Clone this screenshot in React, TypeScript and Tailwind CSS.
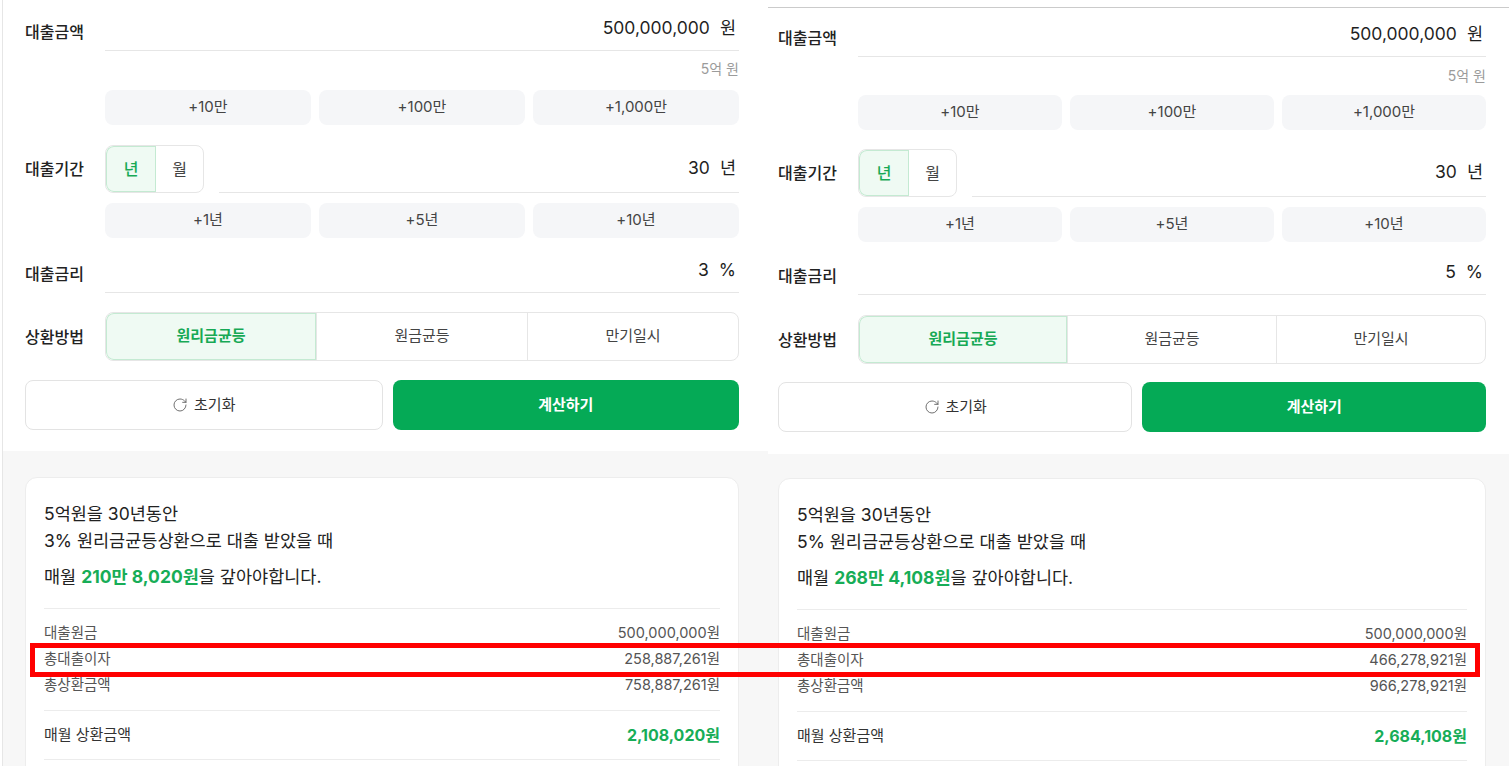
import React from "react";
import { RotateCw } from "lucide-react";

type Data = {
  amount: string;
  amountKo: string;
  years: string;
  rate: string;
  line2: string;
  monthlyHi: string;
  principal: string;
  interest: string;
  total: string;
  monthlyValue: string;
};

type Spacing = {
  outer: string;
  top: string;
  r1: string;
  helper: string;
  btn1: string;
  r2: string;
  btn2: string;
  r3: string;
  r4: string;
  actions: string;
  gray: string;
};

const leftS: Spacing = {
  outer: "w-[766px] ml-[2px] border-l border-[#e6e6e6]",
  top: "pl-[22px] pr-[29px] pt-[7px] pb-[21px]",
  r1: "",
  helper: "mt-[8px]",
  btn1: "mt-[11px]",
  r2: "mt-[20px]",
  btn2: "mt-[10px]",
  r3: "mt-[11px]",
  r4: "mt-[19px]",
  actions: "mt-[19px]",
  gray: "pl-[22px] pr-[29px] pt-[26px]",
};

const rightS: Spacing = {
  outer: "flex-1 mt-[7px] border-t border-[#cbcbcb]",
  top: "pl-[10px] pr-[23px] pt-[5px] pb-[22px]",
  r1: "",
  helper: "mt-[9px]",
  btn1: "mt-[9px]",
  r2: "mt-[19px]",
  btn2: "mt-[10px]",
  r3: "mt-[9px]",
  r4: "mt-[20px]",
  actions: "mt-[18px]",
  gray: "pl-[10px] pr-[23px] pt-[24px]",
};

const leftD: Data = {
  amount: "500,000,000",
  amountKo: "5억 원",
  years: "30",
  rate: "3",
  line2: "3% 원리금균등상환으로 대출 받았을 때",
  monthlyHi: "210만 8,020원",
  principal: "500,000,000원",
  interest: "258,887,261원",
  total: "758,887,261원",
  monthlyValue: "2,108,020원",
};

const rightD: Data = {
  amount: "500,000,000",
  amountKo: "5억 원",
  years: "30",
  rate: "5",
  line2: "5% 원리금균등상환으로 대출 받았을 때",
  monthlyHi: "268만 4,108원",
  principal: "500,000,000원",
  interest: "466,278,921원",
  total: "966,278,921원",
  monthlyValue: "2,684,108원",
};

function Label({ children, top }: { children: React.ReactNode; top?: boolean }) {
  return (
    <div
      className={`w-[80px] shrink-0 text-[16px] leading-[20px] font-medium text-[#222] ${
        top ? "pt-[15px]" : "self-center"
      }`}
    >
      {children}
    </div>
  );
}

function ValueInput({ value, unit, className = "" }: { value: string; unit: string; className?: string }) {
  return (
    <div
      className={`flex-1 border-b border-[#e6e6e6] flex items-center justify-end gap-[10px] pr-[3px] text-[17.5px] text-[#1f1f1f] ${className}`}
    >
      <span>{value}</span>
      <span>{unit}</span>
    </div>
  );
}

function QuickButtons({ items, className }: { items: string[]; className: string }) {
  return (
    <div className={`ml-[80px] grid grid-cols-3 gap-[8px] ${className}`}>
      {items.map((t) => (
        <div
          key={t}
          className="h-[35px] rounded-[8px] bg-[#f5f6f8] flex items-center justify-center text-[15px] text-[#444]"
        >
          {t}
        </div>
      ))}
    </div>
  );
}

function Panel({ d, s }: { d: Data; s: Spacing }) {
  return (
    <div className={`flex flex-col shrink-0 ${s.outer}`}>
      <div className={`bg-white ${s.top}`}>
        <div className={`flex ${s.r1}`}>
          <Label top>대출금액</Label>
          <ValueInput value={d.amount} unit="원" className="h-[44px]" />
        </div>
        <div className={`h-[20px] leading-[20px] text-right text-[14px] text-[#9b9b9b] ${s.helper}`}>
          {d.amountKo}
        </div>
        <QuickButtons items={["+10만", "+100만", "+1,000만"]} className={s.btn1} />

        <div className={`flex ${s.r2}`}>
          <Label>대출기간</Label>
          <div className="flex h-[48px] w-[99px] shrink-0 border border-[#e6e6e6] rounded-[8px] overflow-hidden text-[16px]">
            <div className="w-[50px] flex items-center justify-center bg-[#effaf3] shadow-[inset_0_0_0_1px_#c4ead2] rounded-l-[8px] text-[#17a955] font-medium">
              년
            </div>
            <div className="flex-1 flex items-center justify-center text-[#444]">월</div>
          </div>
          <ValueInput value={d.years} unit="년" className="ml-[15px] h-[48px]" />
        </div>
        <QuickButtons items={["+1년", "+5년", "+10년"]} className={s.btn2} />

        <div className={`flex ${s.r3}`}>
          <Label top>대출금리</Label>
          <ValueInput value={d.rate} unit="%" className="h-[44px]" />
        </div>

        <div className={`flex ${s.r4}`}>
          <Label>상환방법</Label>
          <div className="flex-1 flex h-[49px] border border-[#e6e6e6] rounded-[8px] overflow-hidden text-[15px]">
            <div className="flex-1 flex items-center justify-center bg-[#effaf3] shadow-[inset_0_0_0_1px_#c4ead2] rounded-l-[8px] text-[#17a955] font-semibold">
              원리금균등
            </div>
            <div className="flex-1 flex items-center justify-center text-[#444] border-l border-[#e6e6e6]">
              원금균등
            </div>
            <div className="flex-1 flex items-center justify-center text-[#444] border-l border-[#e6e6e6]">
              만기일시
            </div>
          </div>
        </div>

        <div className={`flex gap-[10px] ${s.actions}`}>
          <div className="grow-[356] basis-0 h-[50px] rounded-[8px] border border-[#e3e3e3] bg-white flex items-center justify-center gap-[6px] text-[15px] text-[#333]">
            <RotateCw size={16} strokeWidth={1.4} className="text-[#666]" />
            <span>초기화</span>
          </div>
          <div className="grow-[347] basis-0 h-[50px] rounded-[8px] bg-[#05aa56] flex items-center justify-center text-[15px] font-semibold text-white">
            계산하기
          </div>
        </div>
      </div>

      <div className={`flex-1 bg-[#f7f7f7] ${s.gray}`}>
        <div className="bg-white border border-[#ededed] rounded-[12px] px-[18px] pt-[22px]">
          <div className="text-[17.5px] leading-[27px] text-[#222]">5억원을 30년동안</div>
          <div className="text-[17.5px] leading-[27px] text-[#222]">{d.line2}</div>
          <div className="mt-[9px] text-[17.5px] leading-[27px] text-[#222]">
            매월 <span className="font-bold text-[#17ad57]">{d.monthlyHi}</span>을 갚아야합니다.
          </div>
          <div className="mt-[18px] border-t border-[#ececec] pt-[11px] pb-[12px] text-[14.5px] text-[#555]">
            <div className="flex justify-between leading-[26px]">
              <span>대출원금</span>
              <span>{d.principal}</span>
            </div>
            <div className="flex justify-between leading-[26px]">
              <span>총대출이자</span>
              <span>{d.interest}</span>
            </div>
            <div className="flex justify-between leading-[26px]">
              <span>총상환금액</span>
              <span>{d.total}</span>
            </div>
          </div>
          <div className="h-[50px] border-t border-b border-[#ececec] flex items-center justify-between">
            <span className="text-[15px] text-[#333]">매월 상환금액</span>
            <span className="text-[16px] font-bold text-[#17ad57]">{d.monthlyValue}</span>
          </div>
          <div className="h-[40px]" />
        </div>
      </div>
    </div>
  );
}

export default function App() {
  return (
    <div className="relative w-[1509px] h-[766px] overflow-hidden bg-white flex font-['Inter','Noto_Sans_CJK_KR',sans-serif]">
      <Panel d={leftD} s={leftS} />
      <Panel d={rightD} s={rightS} />
      <div className="absolute left-[30px] top-[643px] w-[1450px] h-[34px] border-[5px] border-[#ff0000] pointer-events-none" />
    </div>
  );
}
